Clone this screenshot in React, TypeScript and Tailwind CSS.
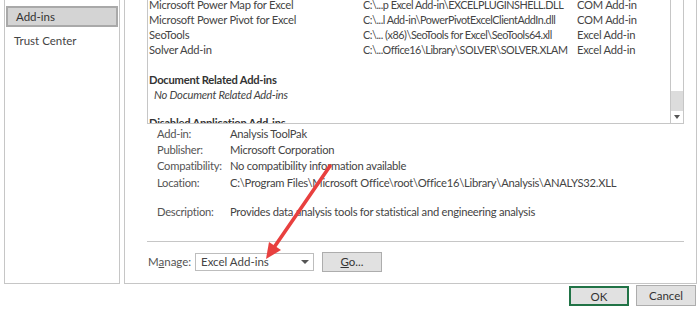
import React from 'react';

const font = { fontFamily: '"Segoe UI", Lato, "Noto Sans", sans-serif' };

const addins = [
  ['Microsoft Power Map for Excel', 'C:\\...p Excel Add-in\\EXCELPLUGINSHELL.DLL', 'COM Add-in'],
  ['Microsoft Power Pivot for Excel', 'C:\\...l Add-in\\PowerPivotExcelClientAddIn.dll', 'COM Add-in'],
  ['SeoTools', 'C:\\... (x86)\\SeoTools for Excel\\SeoTools64.xll', 'Excel Add-in'],
  ['Solver Add-in', 'C:\\...Office16\\Library\\SOLVER\\SOLVER.XLAM', 'Excel Add-in'],
];

const details = [
  ['Add-in:', 'Analysis ToolPak'],
  ['Publisher:', 'Microsoft Corporation'],
  ['Compatibility:', 'No compatibility information available'],
  ['Location:', 'C:\\Program Files\\Microsoft Office\\root\\Office16\\Library\\Analysis\\ANALYS32.XLL'],
];

const App = () => {
  return (
    <div className="relative w-[700px] h-[313px] overflow-hidden bg-white text-[11.2px] tracking-[-0.25px] text-[#444]" style={font}>
      <div className="flex h-[284px]">
        {/* left nav */}
        <div className="ml-[4px] w-[116px] border-x border-b border-[#c6c6c6] pt-[6px]">
          <div className="mx-[1px] h-[21px] flex items-center pl-[8px] bg-[#d4d4d4] border-2 border-[#a9a9a9] text-[#333] text-[11.5px] tracking-normal">
            Add-ins
          </div>
          <div className="h-[24px] flex items-center pl-[9px] mt-[2px] text-[11.5px] tracking-normal">Trust Center</div>
        </div>

        {/* main panel */}
        <div className="ml-[4px] w-[573px] border-x border-b border-[#c6c6c6] pl-[22px] pr-[12px]">
          <div className="h-[124px] flex border-x border-b border-[#c6c6c6] overflow-hidden">
            <div className="flex-1 pl-[1px] overflow-hidden">
              {addins.map((a, i) => (
                <div
                  key={a[0]}
                  className={
                    i === 0
                      ? 'flex h-[11px] items-center whitespace-nowrap'
                      : i === 1
                      ? 'flex h-[15px] mt-[1.5px] items-center whitespace-nowrap'
                      : 'flex h-[15px] items-center whitespace-nowrap'
                  }
                >
                  <span className="w-[214px] shrink-0">{a[0]}</span>
                  <span className="w-[214px] shrink-0 text-[10.8px] tracking-[-0.45px]">{a[1]}</span>
                  <span className="shrink-0">{a[2]}</span>
                </div>
              ))}
              <div className="h-[15px] mt-[15px] flex items-center font-bold text-[#333]">Document Related Add-ins</div>
              <div className="h-[15px] flex items-center italic pl-[5px]">No Document Related Add-ins</div>
              <div className="h-[15px] mt-[13px] flex items-center font-bold text-[#333]">Disabled Application Add-ins</div>
            </div>
            <div className="w-[13px] shrink-0 border-l border-[#c6c6c6] flex flex-col justify-end">
              <div className="h-[20px] bg-[#dcdcdc]" />
              <div className="h-[12px] flex items-center justify-center">
                <div className="w-0 h-0 border-x-[3.5px] border-x-transparent border-t-[4px] border-t-[#555]" />
              </div>
            </div>
          </div>

          <div className="pl-[10px] pt-[2px] text-[#555]">
            {details.map((d) => (
              <div key={d[0]} className="flex h-[16.3px] items-center whitespace-nowrap">
                <span className="w-[73px] shrink-0">{d[0]}</span>
                <span className="text-[#444]">{d[1]}</span>
              </div>
            ))}
            <div className="flex h-[16px] items-center mt-[13.5px] whitespace-nowrap">
              <span className="w-[73px] shrink-0">Description:</span>
              <span className="text-[#444]">Provides data analysis tools for statistical and engineering analysis</span>
            </div>
          </div>

          <div className="mt-[20px] border-t border-[#c6c6c6]" />

          <div className="flex items-center mt-[10px] pl-[1px] text-[11.5px] tracking-normal">
            <span className="w-[47px] shrink-0 text-[#555] whitespace-nowrap">
              M<span className="underline">a</span>nage:
            </span>
            <div className="w-[119px] h-[18px] border border-[#bdbdbd] flex items-center justify-between pl-[5px] pr-[4px]">
              <span>Excel Add-ins</span>
              <div className="w-0 h-0 border-x-[4px] border-x-transparent border-t-[4px] border-t-[#555]" />
            </div>
            <button className="ml-[8px] w-[60px] h-[20px] bg-[#e1e1e1] border border-[#adadad] text-[#333]">
              <span className="underline">G</span>o...
            </button>
          </div>
        </div>
      </div>

      <div className="flex justify-end gap-[7px] mt-[2px] pr-[4px] text-[11.5px] tracking-normal">
        <button className="w-[60px] h-[20px] bg-[#e1e1e1] border-2 border-[#217346] text-[#333]">OK</button>
        <button className="w-[60px] h-[21px] -mt-[1px] bg-[#e1e1e1] border border-[#adadad] text-[#333]">Cancel</button>
      </div>

      {/* red arrow annotation */}
      <svg className="absolute left-0 top-0 pointer-events-none" width="700" height="313">
        <line x1="330" y1="166" x2="275" y2="246" stroke="#e8403f" strokeWidth="3.6" strokeLinecap="round" />
        <polygon points="266,259 281,250 269,242" fill="#e8403f" />
      </svg>
    </div>
  );
};

export default App;
